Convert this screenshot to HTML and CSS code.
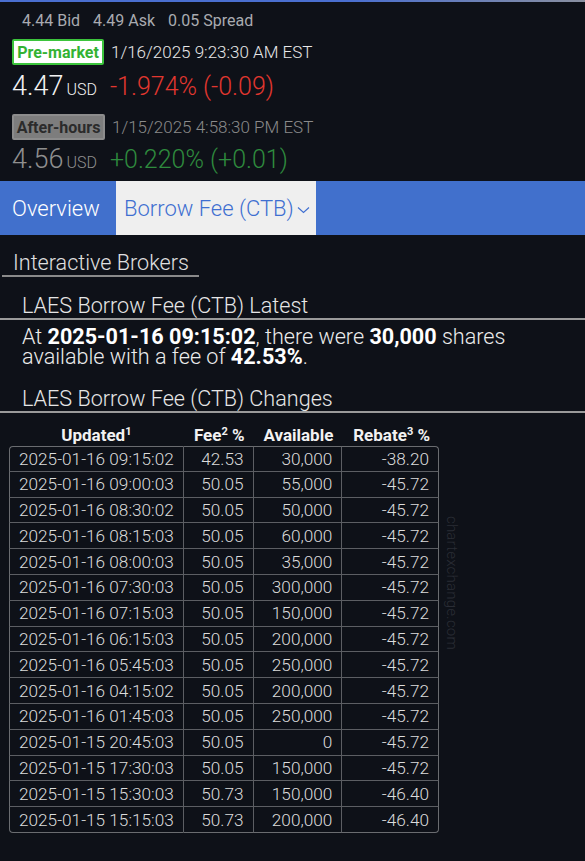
FILE: index.html
```html
<!DOCTYPE html>
<html lang="en">
<head>
<meta charset="utf-8">
<title>LAES Borrow Fee</title>
<link rel="stylesheet" href="styles.css">
</head>
<body>
<div class="topline"></div>
<div class="quote">
  <div class="bidask">
    <span class="ba">4.44 Bid</span>
    <span class="ba">4.49 Ask</span>
    <span class="ba">0.05 Spread</span>
  </div>
  <div class="session">
    <span class="badge badge-pre">Pre-market</span>
    <span class="stamp stamp-pre">1/16/2025 9:23:30 AM EST</span>
  </div>
  <div class="price-row">
    <span class="price price-pre">4.47<span class="cur">USD</span></span>
    <span class="change change-down">-1.974% (-0.09)</span>
  </div>
  <div class="session session-after">
    <span class="badge badge-after">After-hours</span>
    <span class="stamp stamp-after">1/15/2025 4:58:30 PM EST</span>
  </div>
  <div class="price-row price-row-after">
    <span class="price price-after">4.56<span class="cur">USD</span></span>
    <span class="change change-up">+0.220% (+0.01)</span>
  </div>
</div>

<nav class="tabs">
  <span class="tab">Overview</span>
  <span class="tab tab-active">Borrow Fee (CTB)<svg class="chev" width="13" height="8" viewBox="0 0 13 8"><polyline points="1,1.5 6.5,6.5 12,1.5" fill="none" stroke="#3f6fd1" stroke-width="1.1"/></svg></span>
</nav>

<main class="content">
  <div class="broker"><span class="broker-name">Interactive Brokers</span></div>

  <h2 class="section-title">LAES Borrow Fee (CTB) Latest</h2>
  <p class="summary">At <b>2025-01-16 09:15:02</b>, there were <b>30,000</b> shares available with a fee of <b>42.53%</b>.</p>

  <h2 class="section-title section-changes">LAES Borrow Fee (CTB) Changes</h2>

  <div class="table-wrap">
    <table class="fees">
      <thead>
        <tr>
          <th class="c-upd">Updated<sup>1</sup></th>
          <th class="c-num">Fee<sup>2</sup> %</th>
          <th class="c-num">Available</th>
          <th class="c-num">Rebate<sup>3</sup> %</th>
        </tr>
      </thead>
      <tbody>
        <tr><td>2025-01-16 09:15:02</td><td>42.53</td><td>30,000</td><td>-38.20</td></tr>
        <tr><td>2025-01-16 09:00:03</td><td>50.05</td><td>55,000</td><td>-45.72</td></tr>
        <tr><td>2025-01-16 08:30:02</td><td>50.05</td><td>50,000</td><td>-45.72</td></tr>
        <tr><td>2025-01-16 08:15:03</td><td>50.05</td><td>60,000</td><td>-45.72</td></tr>
        <tr><td>2025-01-16 08:00:03</td><td>50.05</td><td>35,000</td><td>-45.72</td></tr>
        <tr><td>2025-01-16 07:30:03</td><td>50.05</td><td>300,000</td><td>-45.72</td></tr>
        <tr><td>2025-01-16 07:15:03</td><td>50.05</td><td>150,000</td><td>-45.72</td></tr>
        <tr><td>2025-01-16 06:15:03</td><td>50.05</td><td>200,000</td><td>-45.72</td></tr>
        <tr><td>2025-01-16 05:45:03</td><td>50.05</td><td>250,000</td><td>-45.72</td></tr>
        <tr><td>2025-01-16 04:15:02</td><td>50.05</td><td>200,000</td><td>-45.72</td></tr>
        <tr><td>2025-01-16 01:45:03</td><td>50.05</td><td>250,000</td><td>-45.72</td></tr>
        <tr><td>2025-01-15 20:45:03</td><td>50.05</td><td>0</td><td>-45.72</td></tr>
        <tr><td>2025-01-15 17:30:03</td><td>50.05</td><td>150,000</td><td>-45.72</td></tr>
        <tr><td>2025-01-15 15:30:03</td><td>50.73</td><td>150,000</td><td>-46.40</td></tr>
        <tr><td>2025-01-15 15:15:03</td><td>50.73</td><td>200,000</td><td>-46.40</td></tr>
      </tbody>
    </table>
    <span class="watermark">chartexchange.com</span>
  </div>
</main>
</body>
</html>
```
FILE: styles.css
```css
* { box-sizing: border-box; }

html, body {
  margin: 0;
  padding: 0;
  background: #0e1118;
  font-family: Roboto, "Liberation Sans", sans-serif;
  color: #e6e6e6;
}

.topline {
  height: 2px;
  background: linear-gradient(to right, #4a6fd0 0%, #4a6fd0 60%, #8a90a0 100%);
}

.quote {
  padding: 0 12px;
}

.bidask {
  height: 36px;
  display: flex;
  align-items: center;
  padding-left: 10px;
  gap: 13px;
  font-size: 16px;
  color: #a9abb0;
}

.session {
  height: 28px;
  display: flex;
  align-items: center;
  gap: 7px;
}

.session-after {
  margin-top: 6px;
  height: 30px;
}

.badge {
  display: inline-flex;
  align-items: center;
  justify-content: center;
  height: 26px;
  padding: 0;
  font-size: 16px;
  font-weight: 700;
  border-radius: 2px;
  white-space: nowrap;
  flex: none;
}

.badge-pre {
  background: #ffffff;
  color: #33b233;
  border: 2px solid #3cc43c;
  width: 92px;
}

.badge-after {
  background: #7d7d7d;
  color: #2b2b2b;
  border: 2px solid #8c8c8c;
  width: 93px;
}

.stamp {
  font-size: 17px;
  font-weight: 300;
  white-space: nowrap;
}

.stamp-pre { color: #e8e8e8; }
.stamp-after { color: #8a8a8a; }

.price-row {
  height: 40px;
  display: flex;
  align-items: center;
  gap: 13px;
}

.price-row-after {
  height: 34px;
}

.price {
  font-size: 27px;
  font-weight: 300;
}

.cur {
  font-size: 16px;
  margin-left: 3px;
}

.price-pre { color: #f2f2f2; }
.price-after { color: #8f8f8f; }

.change {
  font-size: 25px;
  font-weight: 300;
}

.change-down { color: #e2372f; }
.change-up { color: #2e8b3e; }

.tabs {
  margin-top: 5px;
  height: 54px;
  background: #4170cc;
  display: flex;
  align-items: stretch;
}

.tab {
  display: flex;
  align-items: center;
  padding: 0 0 0 12px;
  width: 116px;
  font-size: 22px;
  font-weight: 300;
  color: #ffffff;
  white-space: nowrap;
}

.tab-active {
  background: #efefef;
  color: #3f6fd1;
  padding: 0 0 0 8px;
  width: 200px;
}

.chev {
  margin-left: 3px;
  margin-top: 4px;
}

.content {
  padding: 0;
}

.broker {
  margin-top: 16px;
  padding-left: 2px;
}

.broker-name {
  display: inline-block;
  line-height: 24px;
  padding: 0 0 0 11px;
  font-size: 21.6px;
  font-weight: 300;
  color: #e0e0e0;
  border-bottom: 2px solid #8a8a8a;
  width: 197px;
  white-space: nowrap;
}

.section-title {
  margin: 17px 0 0 0;
  padding-left: 22px;
  line-height: 24px;
  font-size: 21.6px;
  font-weight: 300;
  color: #e6e6e6;
  border-bottom: 2px solid #9a9a9a;
}

.section-changes {
  margin-top: 20px;
}

.summary {
  margin: 7px 0 0 0;
  padding: 0 22px;
  font-size: 21.6px;
  line-height: 20px;
  font-weight: 300;
  color: #ececec;
}

.summary b {
  font-weight: 700;
  color: #ffffff;
}

.table-wrap {
  position: relative;
  margin-top: 11px;
  padding-left: 9px;
}

.fees {
  width: 430px;
  border-collapse: separate;
  border-spacing: 0;
  font-size: 17.2px;
  font-weight: 300;
  color: #dcdcdc;
}

.fees th {
  height: 22px;
  padding: 0 9px;
  font-weight: 700;
  color: #f2f2f2;
  text-align: right;
  font-size: 17px;
  white-space: nowrap;
}

.fees th.c-upd {
  text-align: center;
}

.fees sup {
  font-size: 11px;
  vertical-align: 6px;
  line-height: 0;
}

.fees td {
  height: 25.8px;
  padding: 0 9px 0 9px;
  text-align: right;
  white-space: nowrap;
  border-right: 1.5px solid #5c5e63;
  border-bottom: 1.5px solid #5c5e63;
}

.fees td:first-child {
  text-align: left;
  border-left: 1.5px solid #6a6c70;
  width: 174px;
}

.fees td:nth-child(2) { width: 70px; }
.fees td:nth-child(3) { width: 89px; }
.fees td:nth-child(4) { width: 97px; border-right-color: #6a6c70; }

.fees tbody tr:first-child td {
  border-top: 1.5px solid #6a6c70;
}

.fees tbody tr:first-child td:first-child { border-top-left-radius: 4px; }
.fees tbody tr:first-child td:last-child { border-top-right-radius: 4px; }
.fees tbody tr:last-child td { border-bottom-color: #6a6c70; }
.fees tbody tr:last-child td:first-child { border-bottom-left-radius: 4px; }
.fees tbody tr:last-child td:last-child { border-bottom-right-radius: 4px; }

.watermark {
  position: absolute;
  left: 443px;
  top: 92px;
  writing-mode: vertical-rl;
  font-size: 15px;
  font-weight: 300;
  color: #2a2d35;
  letter-spacing: 0.2px;
}
```
